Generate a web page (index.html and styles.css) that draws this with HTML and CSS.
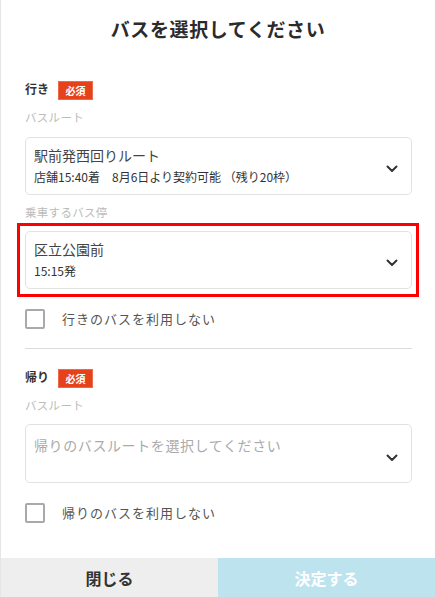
FILE: index.html
```html
<!DOCTYPE html>
<html lang="ja">
<head>
<meta charset="utf-8">
<title>バスを選択してください</title>
<link rel="stylesheet" href="styles.css">
</head>
<body>
<div class="modal">
  <header class="header"><h1 class="title">バスを選択してください</h1></header>
  <div class="content">
    <div class="label-row"><span class="label">行き</span><span class="badge">必須</span></div>
    <div class="sub-label">バスルート</div>
    <div class="select">
      <div class="select-text">
        <div class="main">駅前発西回りルート</div>
        <div class="sub">店舗15:40着　8月6日より契約可能 （残り20枠）</div>
      </div>
      <svg class="chev" width="12" height="8" viewBox="0 0 12 8"><path d="M1.5 1.5 L6 6 L10.5 1.5" fill="none" stroke="#333" stroke-width="2" stroke-linecap="round" stroke-linejoin="round"/></svg>
    </div>
    <div class="sub-label">乗車するバス停</div>
    <div class="select select-stop highlighted">
      <div class="select-text">
        <div class="main">区立公園前</div>
        <div class="sub">15:15発</div>
      </div>
      <svg class="chev" width="12" height="8" viewBox="0 0 12 8"><path d="M1.5 1.5 L6 6 L10.5 1.5" fill="none" stroke="#333" stroke-width="2" stroke-linecap="round" stroke-linejoin="round"/></svg>
    </div>
    <label class="check"><span class="box"></span><span class="check-text">行きのバスを利用しない</span></label>
    <hr class="divider">
    <div class="label-row label-row-2"><span class="label">帰り</span><span class="badge">必須</span></div>
    <div class="sub-label">バスルート</div>
    <div class="select select-empty">
      <div class="placeholder">帰りのバスルートを選択してください</div>
      <svg class="chev" width="12" height="8" viewBox="0 0 12 8"><path d="M1.5 1.5 L6 6 L10.5 1.5" fill="none" stroke="#333" stroke-width="2" stroke-linecap="round" stroke-linejoin="round"/></svg>
    </div>
    <label class="check"><span class="box"></span><span class="check-text">帰りのバスを利用しない</span></label>
  </div>
  <footer class="footer">
    <button class="btn btn-close">閉じる</button>
    <button class="btn btn-ok">決定する</button>
  </footer>
</div>
</body>
</html>
```

FILE: styles.css
```css
* { box-sizing: border-box; }
html, body { margin: 0; padding: 0; background: #fff; }
body {
  font-family: "Noto Sans CJK JP", "Noto Sans", sans-serif;
  color: #333;
}
.modal {
  width: 435px;
  height: 597px;
  border-left: 1px solid #e6e6e6;
  display: flex;
  flex-direction: column;
}
.header {
  height: 58px;
  display: flex;
  align-items: center;
  justify-content: center;
}
.title {
  margin: 0;
  font-size: 19px;
  font-weight: 700;
  letter-spacing: 0.6px;
  line-height: 28px;
  color: #2b2b2b;
}
.content {
  flex: 1;
  padding: 0 23px 0 24px;
}
.label-row {
  margin-top: 23px;
  height: 19px;
  display: flex;
  align-items: flex-start;
  gap: 9px;
}
.label-row-2 { margin-top: 20px; }
.label {
  font-size: 12px;
  font-weight: 700;
  line-height: 16px;
  color: #333;
}
.badge {
  width: 35px;
  height: 19px;
  background: #e5421c;
  color: #fff;
  font-size: 10px;
  font-weight: 700;
  display: flex;
  align-items: center;
  justify-content: center;
  border: 1px solid #f06a4a;
}
.sub-label {
  margin-top: 8px;
  font-size: 11.5px;
  line-height: 18px;
  color: #bbb;
  letter-spacing: 0.3px;
}
.select {
  margin-top: 11px;
  height: 58px;
  border: 1px solid #e2e2e2;
  border-radius: 5px;
  padding: 7px 13px 0 8px;
  display: flex;
  justify-content: space-between;
  align-items: flex-start;
}
.select-stop { margin-top: 10px; }
.highlighted { position: relative; }
.highlighted::after {
  content: "";
  position: absolute;
  top: -9px;
  left: -9px;
  right: -8px;
  bottom: -9px;
  border: 3px solid #f00;
  pointer-events: none;
}
.select-text .main {
  font-size: 14px;
  line-height: 21px;
  color: #444;
}
.select-text .sub {
  font-size: 12px;
  line-height: 21px;
  color: #333;
}
.chev { margin-top: 20px; }
.select-empty {
  margin-top: 10px;
  height: 59px;
  padding-top: 9px;
}
.select-empty .chev { margin-top: 20px; }
.placeholder {
  font-size: 14px;
  line-height: 22px;
  color: #aaa;
  letter-spacing: 0.6px;
}
.check {
  margin-top: 20px;
  display: flex;
  align-items: center;
  gap: 17px;
  height: 20px;
}
.box {
  width: 20px;
  height: 20px;
  border: 2px solid #a9a9a9;
  border-radius: 2px;
}
.check-text {
  font-size: 13px;
  letter-spacing: 1px;
  color: #555;
  line-height: 20px;
}
.divider {
  margin: 19px 0 0;
  border: 0;
  border-top: 1.5px solid #dcdcdc;
  height: 0;
}
.footer {
  height: 39px;
  display: flex;
}
.btn {
  border: 0;
  margin: 0;
  padding: 0;
  font-family: inherit;
  font-size: 16px;
  font-weight: 700;
  height: 39px;
}
.btn-close {
  width: 217px;
  background: #eeeeee;
  color: #333;
}
.btn-ok {
  flex: 1;
  background: #bde4ee;
  color: #fff;
}
```
